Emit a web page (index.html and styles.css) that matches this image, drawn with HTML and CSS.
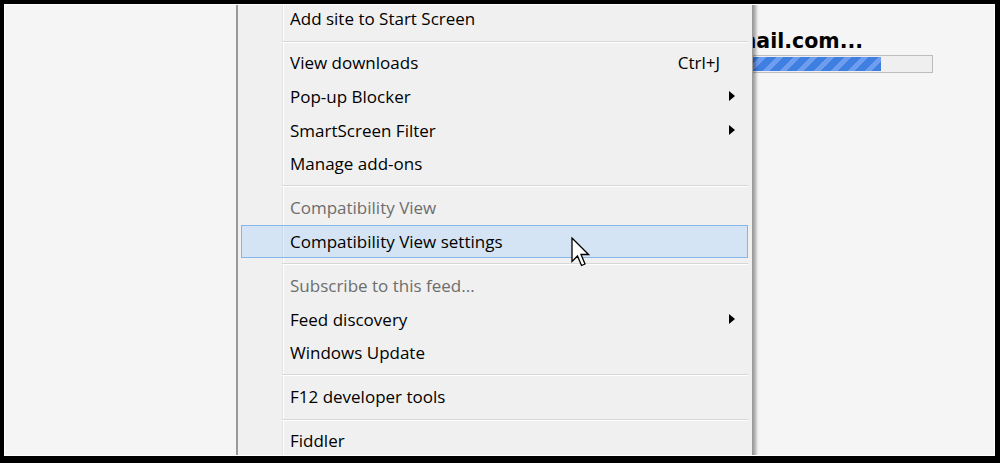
FILE: index.html
```html
<!DOCTYPE html>
<html lang="en">
<head>
    <meta charset="UTF-8">
    <meta name="viewport" content="width=device-width, initial-scale=1.0">
    <title>Tools menu</title>
    <link rel="stylesheet" href="styles.css">
</head>
<body>
    <div class="frame">
        <div class="page">
            <div class="status">
                <div class="status-title">Connecting to mail.com...</div>
                <div class="bar"><div class="bar-fill" style="width:86.5%"></div></div>
            </div>

            <div class="menu">
                <div class="item">Add site to Start Screen</div>
                <div class="sep"></div>
                <div class="item">View downloads<span class="key">Ctrl+J</span></div>
                <div class="item">Pop-up Blocker<span class="arrow"></span></div>
                <div class="item">SmartScreen Filter<span class="arrow"></span></div>
                <div class="item">Manage add-ons</div>
                <div class="sep"></div>
                <div class="item disabled">Compatibility View</div>
                <div class="item hover">Compatibility View settings</div>
                <div class="sep"></div>
                <div class="item disabled">Subscribe to this feed...</div>
                <div class="item">Feed discovery<span class="arrow"></span></div>
                <div class="item">Windows Update</div>
                <div class="sep"></div>
                <div class="item">F12 developer tools</div>
                <div class="sep"></div>
                <div class="item">Fiddler</div>
            </div>

            <svg class="cursor" width="19" height="30" viewBox="0 0 19 30">
                <path d="M1 1 L1 24.5 L6.5 19 L10.5 28.5 L14 27 L10 17.5 L17.5 17.5 Z" fill="#fff" stroke="#000" stroke-width="1.3" stroke-linejoin="miter"/>
            </svg>
        </div>
    </div>
</body>
</html>
```

FILE: styles.css
```css
html,body{margin:0;padding:0;background:#000}
.frame{width:1000px;height:463px;box-sizing:border-box;padding:4px 5px 7px 4px;background:#000}
.page{position:relative;height:100%;box-sizing:border-box;border:1px solid #fff;background:#f5f5f5;overflow:hidden}

.status{width:373px;margin:24px 0 0 555px}
.status-title{font-family:"DejaVu Sans",Verdana,sans-serif;font-weight:bold;font-size:20.5px;line-height:24px;color:#000;text-align:right;padding-right:70px;white-space:nowrap}
.bar{margin-top:2px;height:14px;padding:1px;border:1px solid #bcbcbc;background:#efefef}
.bar-fill{height:100%;background-color:#3f7fe2;background-image:repeating-linear-gradient(-45deg,#3f7fe2 0 7px,#6e9df0 7px 12px)}

.menu{position:absolute;left:231px;top:-4px;width:507px;padding:0 4px 30px 3px;border:1px solid #9a9a9a;border-left-width:2px;background:linear-gradient(to right,#f0f0f0 0 44px,#e2e3e3 44px 45px,#fff 45px 46px,#f0f0f0 46px);box-shadow:3px 2px 3px rgba(0,0,0,0.35);font-family:"Segoe UI","Open Sans",sans-serif;font-size:17px;color:#000}
.item{display:flex;align-items:center;height:33.6px;box-sizing:border-box;padding:0 12px 0 48px;border:1px solid transparent;white-space:nowrap}
.item.disabled{color:#6d6d6d}
.item.hover{background:rgba(128,192,255,0.25);border-color:#84b6ea}
.key{margin-left:auto;margin-right:15px}
.arrow{margin-left:auto;width:0;height:0;border-left:6px solid #000;border-top:5px solid transparent;border-bottom:5px solid transparent}
.sep{height:1px;background:#d7d7d7;border-bottom:1px solid #fff;margin:5px 0 3.5px 41px}

.cursor{position:absolute;left:566px;top:232px}
```
